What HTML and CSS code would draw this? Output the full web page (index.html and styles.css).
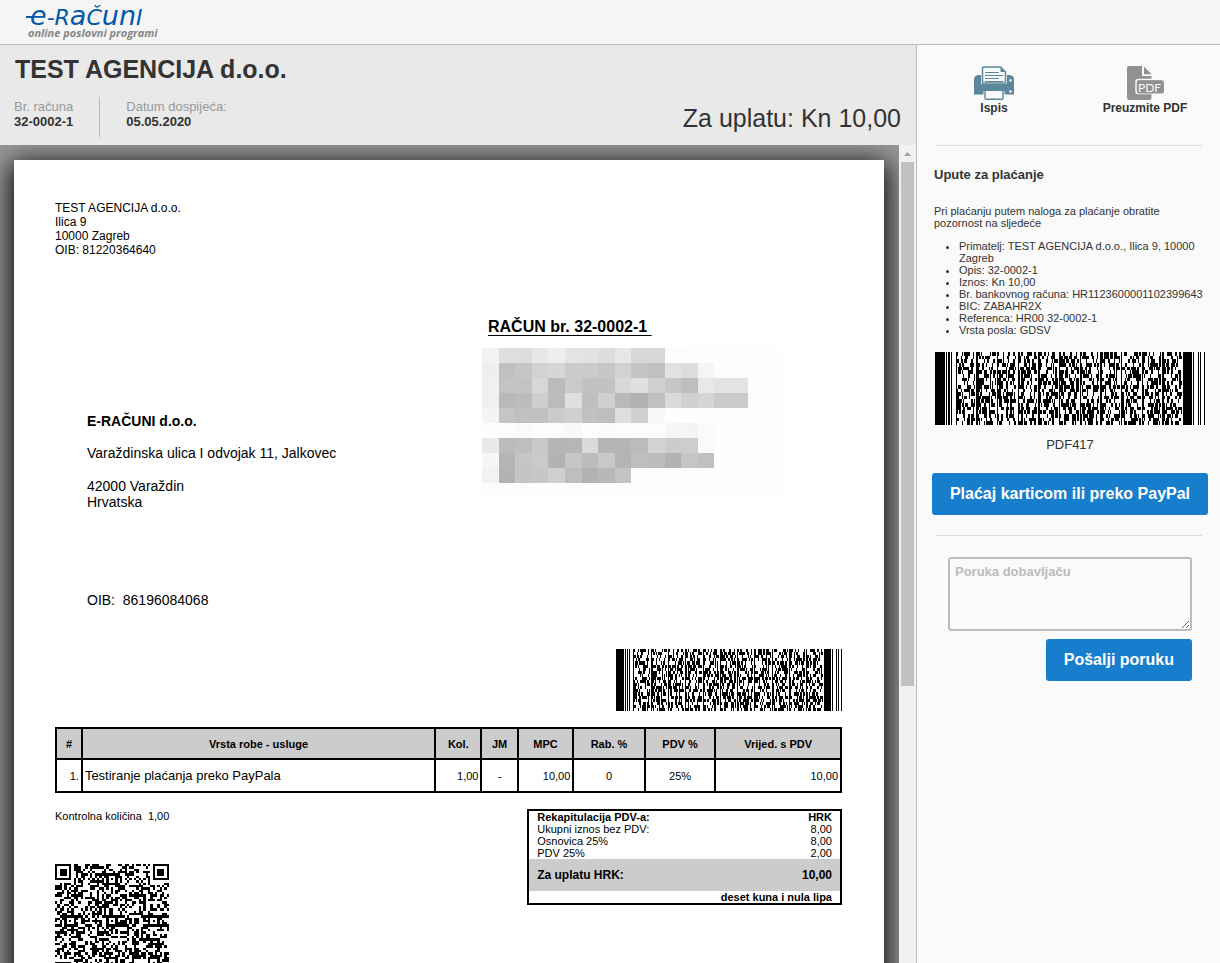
FILE: index.html
```html
<!DOCTYPE html>
<html lang="hr">
<head>
<meta charset="utf-8">
<meta name="viewport" content="width=device-width, initial-scale=1">
<title>Račun 32-0002-1</title>
<link rel="stylesheet" href="styles.css">
</head>
<body>
<header class="topbar">
  <a class="logo" href="#">
    <span class="logo-name"><span class="logo-low logo-e">e</span>-R<span class="logo-low">a</span>Č<span class="logo-low">un</span>I</span>
    <span class="logo-tag">online poslovni programi</span>
  </a>
</header>
<div class="layout">
  <main class="content">
    <section class="summary">
      <h1 class="company">TEST AGENCIJA d.o.o.</h1>
      <div class="summary-row">
        <dl class="facts">
          <div class="fact"><dt>Br. računa</dt><dd>32-0002-1</dd></div>
          <div class="fact"><dt>Datum dospijeća:</dt><dd>05.05.2020</dd></div>
        </dl>
        <p class="amount">Za uplatu: Kn 10,00</p>
      </div>
    </section>
    <div class="viewer">
      <div class="desk">
        <article class="paper">
          <address class="sender">TEST AGENCIJA d.o.o.<br>Ilica 9<br>10000 Zagreb<br>OIB: 81220364640</address>
          <div class="parties">
            <div class="recipient">
              <p class="recipient-name">E-RAČUNI d.o.o.</p>
              <p class="recipient-street">Varaždinska ulica I odvojak 11, Jalkovec</p>
              <p class="recipient-city">42000 Varaždin<br>Hrvatska</p>
              <p>OIB:&nbsp; 86196084068</p>
            </div>
            <div class="invoice-info">
              <h2 class="invoice-title">RAČUN br. 32-0002-1&nbsp;</h2>
              <svg class="mosaic" id="mosaic" viewBox="0 0 18 10" preserveAspectRatio="none" aria-hidden="true"></svg>
            </div>
          </div>
          <svg class="pdf417 paper-code" viewBox="0 0 222 20" preserveAspectRatio="none" role="img" aria-label="PDF417"></svg>
          <table class="items">
            <colgroup><col class="c-no"><col class="c-name"><col class="c-qty"><col class="c-unit"><col class="c-price"><col class="c-disc"><col class="c-vat"><col class="c-total"></colgroup>
            <thead><tr><th>#</th><th>Vrsta robe - usluge</th><th>Kol.</th><th>JM</th><th>MPC</th><th>Rab. %</th><th>PDV %</th><th>Vrijed. s PDV</th></tr></thead>
            <tbody><tr><td class="num">1.</td><td class="name">Testiranje plaćanja preko PayPala</td><td class="num">1,00</td><td>-</td><td class="num">10,00</td><td>0</td><td>25%</td><td class="num">10,00</td></tr></tbody>
          </table>
          <div class="closing">
            <div class="control">
              <p>Kontrolna količina&nbsp; 1,00</p>
              <svg class="qr" id="qr" viewBox="0 0 49 49" role="img" aria-label="QR"></svg>
            </div>
            <table class="totals">
              <thead><tr><th scope="col">Rekapitulacija PDV-a:</th><th scope="col">HRK</th></tr></thead>
              <tbody>
                <tr><td>Ukupni iznos bez PDV:</td><td>8,00</td></tr>
                <tr><td>Osnovica 25%</td><td>8,00</td></tr>
                <tr><td>PDV 25%</td><td>2,00</td></tr>
                <tr class="due"><th scope="row">Za uplatu HRK:</th><td>10,00</td></tr>
              </tbody>
              <tfoot><tr><td colspan="2">deset kuna i nula lipa</td></tr></tfoot>
            </table>
          </div>
        </article>
      </div>
      <div class="scrollbar" aria-hidden="true">
        <svg class="scroll-arrow" viewBox="0 0 17 17"><path d="M5 11h7L8.500 7z" fill="#a3a3a3"/></svg>
        <div class="scroll-thumb"></div>
      </div>
    </div>
  </main>
  <aside class="side">
    <nav class="actions">
      <a class="action" href="#">
        <svg width="40" height="34" viewBox="0 0 40 34" aria-hidden="true">
          <path d="M4 9h32q4 1 4 4v15.500H0V13q0-3 4-4z" fill="#5b879d"/>
          <path d="M7 18V1.500Q7 0 8.500 0H27l6 6v12z" fill="#fafafa"/>
          <path d="M8.500 17V2q0-1 1-1h17l5 5v11z" fill="#fafafa" stroke="#5b879d" stroke-width="1.500"/>
          <path d="M26.500 1v5h5z" fill="#5b879d"/>
          <path d="M11 6.500h14M11 9.500h18M11 12.500h14M11 15.500h18" stroke="#5b879d"/>
          <path d="M0 18h40v7H0z" fill="#5b879d"/>
          <circle cx="36.500" cy="14.500" r="1.300" fill="#fafafa"/><circle cx="36.500" cy="25.500" r="1.300" fill="#fafafa"/>
          <path d="M9.500 25h21v9h-21z" fill="#fafafa"/>
          <path d="M11 25v7q0 1.200 1.200 1.200h15.600q1.200 0 1.200-1.200v-7" fill="#fafafa" stroke="#5b879d" stroke-width="1.400"/>
        </svg>
        <span>Ispis</span>
      </a>
      <a class="action" href="#">
        <svg width="38" height="34" viewBox="0 0 38 34" aria-hidden="true">
          <path d="M3 0h13v10h9.500v22q0 2-2 2H3q-2 0-2-2V2q0-2 2-2z" fill="#919191"/>
          <path d="M18 0.500 25.500 8.300H18z" fill="#919191"/>
          <rect x="10" y="13.500" width="27.500" height="14" rx="2.500" fill="#919191" stroke="#fafafa" stroke-width="1.500"/>
          <rect x="11" y="14.500" width="27" height="13" rx="2" fill="#919191"/>
          <text class="pdf-mark" x="12" y="26">PDF</text>
        </svg>
        <span>Preuzmite PDF</span>
      </a>
    </nav>
    <section class="instructions">
      <h2 class="side-title">Upute za plaćanje</h2>
      <p class="side-text">Pri plaćanju putem naloga za plaćanje obratite pozornost na sljedeće</p>
      <ul class="payment">
        <li>Primatelj: TEST AGENCIJA d.o.o., Ilica 9, 10000 Zagreb</li>
        <li>Opis: 32-0002-1</li>
        <li>Iznos: Kn 10,00</li>
        <li>Br. bankovnog računa: HR1123600001102399643</li>
        <li>BIC: ZABAHR2X</li>
        <li>Referenca: HR00 32-0002-1</li>
        <li>Vrsta posla: GDSV</li>
      </ul>
      <figure class="code">
        <svg class="pdf417" viewBox="0 0 222 20" preserveAspectRatio="none" role="img" aria-label="PDF417"></svg>
        <figcaption>PDF417</figcaption>
      </figure>
      <button class="btn btn-pay" type="button">Plaćaj karticom ili preko PayPal</button>
    </section>
    <form class="message">
      <textarea class="message-box" aria-label="Poruka dobavljaču" placeholder="Poruka dobavljaču"></textarea>
      <button class="btn" type="button">Pošalji poruku</button>
    </form>
  </aside>
</div>
<script src="codes.js"></script>
</body>
</html>
```
FILE: styles.css
```css
* { box-sizing: border-box; }
body {
  margin: 0;
  height: 100vh;
  display: flex;
  flex-direction: column;
  overflow: hidden;
  font-family: "Liberation Sans", Arial, sans-serif;
  font-size: 11px;
  color: #333;
  background: #fafafa;
}
h1, h2, p, dl, dd, figure { margin: 0; }
a { color: inherit; text-decoration: none; }
svg { display: block; }

.topbar {
  flex: none;
  height: 45px;
  padding: 0 26px;
  background: #f5f5f5;
  border-bottom: 1px solid #bbb;
}
.logo { display: inline-flex; flex-direction: column; }
.logo-name {
  height: 26px;
  padding-left: 4px;
  font: italic 22px/32px "DejaVu Sans", sans-serif;
  color: #0058a9;
}
.logo-low { font-size: 27px; }
.logo-e { position: relative; }
.logo-e::before {
  content: "";
  position: absolute;
  left: -4px;
  bottom: 13px;
  width: 8px;
  height: 2px;
  background: #0058a9;
}
.logo-tag {
  padding-left: 2px;
  font: italic 700 11px/14px "Open Sans", sans-serif;
  color: #868686;
}

.layout { flex: 1; min-height: 0; display: grid; grid-template-columns: minmax(0, 1fr) 303px; }
.content { min-height: 0; display: flex; flex-direction: column; border-right: 1px solid #bbb; }

.summary { flex: none; height: 100px; padding: 9px 15px 8px 14px; background: #e9e9e9; }
.company { padding-left: 1px; font-size: 25px; line-height: 30px; }
.summary-row { display: flex; justify-content: space-between; padding-top: 13px; }
.facts { display: flex; }
.fact { height: 40px; padding-top: 2px; font-size: 13px; line-height: 15px; }
.fact + .fact { margin-left: 26px; padding-left: 26px; border-left: 1px solid #bbb; }
.fact dt { color: #999; }
.fact dd { font-weight: 700; }
.amount { font-size: 25px; line-height: 42px; }

.viewer { flex: 1; min-height: 0; display: flex; }
.desk { flex: 1; min-width: 0; padding: 15px 15px 0 14px; overflow: hidden; background: #999; }
.paper {
  min-height: 1230px;
  padding: 41px 42px 0 41px;
  background: #fff;
  color: #000;
  box-shadow: 0 6px 26px 3px #000;
}
.scrollbar { flex: none; width: 17px; background: #f1f1f1; }
.scroll-arrow { width: 17px; height: 17px; }
.scroll-thumb { height: 64%; margin: 0 2px; background: #c1c1c1; }

.sender { font-size: 12px; font-style: normal; line-height: 14px; }
.parties { display: grid; grid-template-columns: 427fr 360fr; padding-top: 60px; }
.recipient { padding: 96px 0 0 32px; font-size: 14px; line-height: 16px; }
.recipient-name { font-weight: 700; }
.recipient-street { padding: 16px 0 17px; }
.recipient-city { padding-bottom: 82px; }
.invoice-title { padding-left: 6px; font-size: 16px; line-height: 20px; text-decoration: underline; text-underline-offset: 3px; }
.mosaic { width: 83%; height: 150px; margin-top: 11px; }
.paper-code { width: 226px; height: 62px; margin: 41px 0 16px auto; }

.items { width: 100%; table-layout: fixed; border-collapse: collapse; font-size: 11px; }
.items th, .items td { border: 2px solid #000; padding: 0 2px; text-align: center; }
.items th { height: 31px; background: #ccc; }
.items td { height: 33px; }
.items .num { text-align: right; }
.items .name { font-size: 13px; text-align: left; }
.c-no { width: 3.3%; }
.c-name { width: 45%; }
.c-qty { width: 5.9%; }
.c-unit { width: 4.6%; }
.c-price { width: 7.1%; }
.c-disc { width: 9.1%; }
.c-vat { width: 9%; }
.c-total { width: 16%; }

.closing { display: flex; justify-content: space-between; align-items: flex-start; padding-top: 16px; }
.control { font-size: 11px; line-height: 14px; }
.qr { width: 114px; height: 114px; margin-top: 41px; }
.totals { width: 40%; border: 2px solid #000; border-collapse: separate; border-spacing: 0; font-size: 11px; line-height: 12px; }
.totals th, .totals td { padding: 0 8px; text-align: right; }
.totals tr > :first-child { text-align: left; }
.totals .due > * { height: 32px; background: #ccc; font-size: 12px; font-weight: 700; }
.totals tfoot tr > td:first-child { text-align: right; font-weight: 700; }

.side { padding: 0 12px 0 15px; }
.actions { display: grid; grid-template-columns: 1fr 1fr; margin: 0 6px 0 4px; height: 101px; padding-top: 21px; border-bottom: 1px solid #ddd; }
.action { display: flex; flex-direction: column; align-items: center; justify-self: center; font-size: 12px; font-weight: 700; line-height: 16px; }
.action:first-child { margin-right: 17px; }
.action:last-child { margin-left: 19px; }
.pdf-mark { font: 400 12px Lato, sans-serif; fill: #fafafa; }

.instructions { padding-top: 21px; }
.side-title, .side-text { padding-left: 2px; }
.side-title { font-size: 13px; line-height: 16px; }
.side-text { padding-top: 22px; line-height: 12px; }
.payment { margin: 11px 0 16px; padding-left: 27px; line-height: 12px; }
.code { padding: 0 3px; }
.code .pdf417 { width: 100%; height: 73px; }
.code figcaption { padding: 12px 0; font-size: 13px; line-height: 16px; text-align: center; }
.btn {
  height: 42px;
  padding: 0 18px;
  border: 0;
  border-radius: 3px;
  background: #177ecd;
  color: #fff;
  font: 700 16px "Liberation Sans", Arial, sans-serif;
}
.btn-pay { width: 100%; margin-top: 8px; padding: 0; }
.message { display: flex; flex-direction: column; align-items: flex-end; gap: 8px; margin: 20px 6px 0 4px; padding: 21px 10px 0 12px; border-top: 1px solid #ddd; }
.message-box {
  width: 100%;
  height: 74px;
  padding: 5px;
  border: 2px solid #bbb;
  border-radius: 3px;
  background: #fafafa;
  font: 700 13px/16px "Liberation Sans", Arial, sans-serif;
}
.message-box::placeholder { color: #bbb; }
```
FILE: codes.js
```javascript
const NS = "http://www.w3.org/2000/svg";

// mulberry32 generator, so that the codes are the same on each load.
function random(seed) {
  let a = seed;
  return () => {
    a = (a + 0x6D2B79F5) | 0;
    let t = Math.imul(a ^ (a >>> 15), 1 | a);
    t = (t + Math.imul(t ^ (t >>> 7), 61 | t)) ^ t;
    return ((t ^ (t >>> 14)) >>> 0) / 4294967296;
  };
}

function shape(svg, d, fill) {
  const p = document.createElementNS(NS, "path");
  p.setAttribute("d", d);
  p.setAttribute("fill", fill);
  p.setAttribute("shape-rendering", "crispEdges");
  svg.appendChild(p);
}

// Four bars and four spaces that fill 17 modules.
function codeword(rnd) {
  for (;;) {
    const cuts = new Set();
    while (cuts.size < 7) cuts.add(1 + Math.floor(rnd() * 16));
    const edges = [0, ...[...cuts].sort((a, b) => a - b), 17];
    const w = edges.slice(1).map((e, i) => e - edges[i]);
    if (Math.max(...w) <= 6) return w;
  }
}

function drawPdf417(svg) {
  const rnd = random(417);
  let d = "";
  for (let y = 0; y < 20; y++) {
    let widths = [8, 1, 1, 1, 1, 1, 1, 3];
    for (let c = 0; c < 11; c++) widths = widths.concat(codeword(rnd));
    widths = widths.concat([7, 1, 1, 3, 1, 1, 1, 2, 1]);
    let x = 0;
    widths.forEach((w, i) => {
      if (i % 2 === 0) d += `M${x} ${y}h${w}v1h-${w}z`;
      x += w;
    });
  }
  shape(svg, "M0 0h222v20H0z", "#fff");
  shape(svg, d, "#000");
}

function drawQr(svg) {
  const n = 49, rnd = random(49);
  const m = Array.from({ length: n }, () => Array.from({ length: n }, () => rnd() < 0.5));
  for (let i = 0; i < n; i++) m[6][i] = m[i][6] = i % 2 === 0;
  const square = (cx, cy, reach, dark) => {
    for (let dy = -reach; dy <= reach; dy++) for (let dx = -reach; dx <= reach; dx++) {
      const x = cx + dx, y = cy + dy;
      if (x >= 0 && y >= 0 && x < n && y < n) m[y][x] = dark(Math.max(Math.abs(dx), Math.abs(dy)));
    }
  };
  [[24, 6], [6, 24], [24, 24], [42, 24], [24, 42], [42, 42]].forEach(([x, y]) => square(x, y, 2, r => r !== 1));
  [[3, 3], [45, 3], [3, 45]].forEach(([x, y]) => square(x, y, 4, r => r !== 2 && r !== 4));
  let d = "";
  m.forEach((row, y) => row.forEach((on, x) => { if (on) d += `M${x} ${y}h1v1h-1z`; }));
  shape(svg, d, "#000");
}

// Grey level of each tile of the hidden address block.
const tiles = [
  "f2 df dd e7 ee e4 e2 dd e7 d8 d8 fc",
  "ef c0 c6 d2 d6 cb cb c7 d2 c4 c0 e2 dd f5",
  "f0 c3 c3 d7 bb ca c2 c2 d8 e0 d0 c6 be e8 e3 e3",
  "f0 b9 bc ce bb df bf d0 b9 b1 c0 da d0 d5 ca ca",
  "f4 c5 c0 c0 cb cf c1 be de d0 f8",
  "fd fd fa fd fc f9 fd fb fd fc fc f6 f4 fa",
  "e9 bb be c9 b5 b6 da b5 b5 bb d2 cc cd fa",
  "f6 b5 c5 ca b3 c6 bc c8 b4 be bd b3 c5 c0",
  "f2 b3 c4 c7 cf be b2 b8 c3"
];

function drawMosaic(svg) {
  shape(svg, "M0 0h18v10H0z", "#fdfdfd");
  tiles.forEach((row, y) => row.split(" ").forEach((g, x) => shape(svg, `M${x} ${y}h1v1h-1z`, `#${g}${g}${g}`)));
}

document.querySelectorAll(".pdf417").forEach(drawPdf417);
drawQr(document.getElementById("qr"));
drawMosaic(document.getElementById("mosaic"));
```
